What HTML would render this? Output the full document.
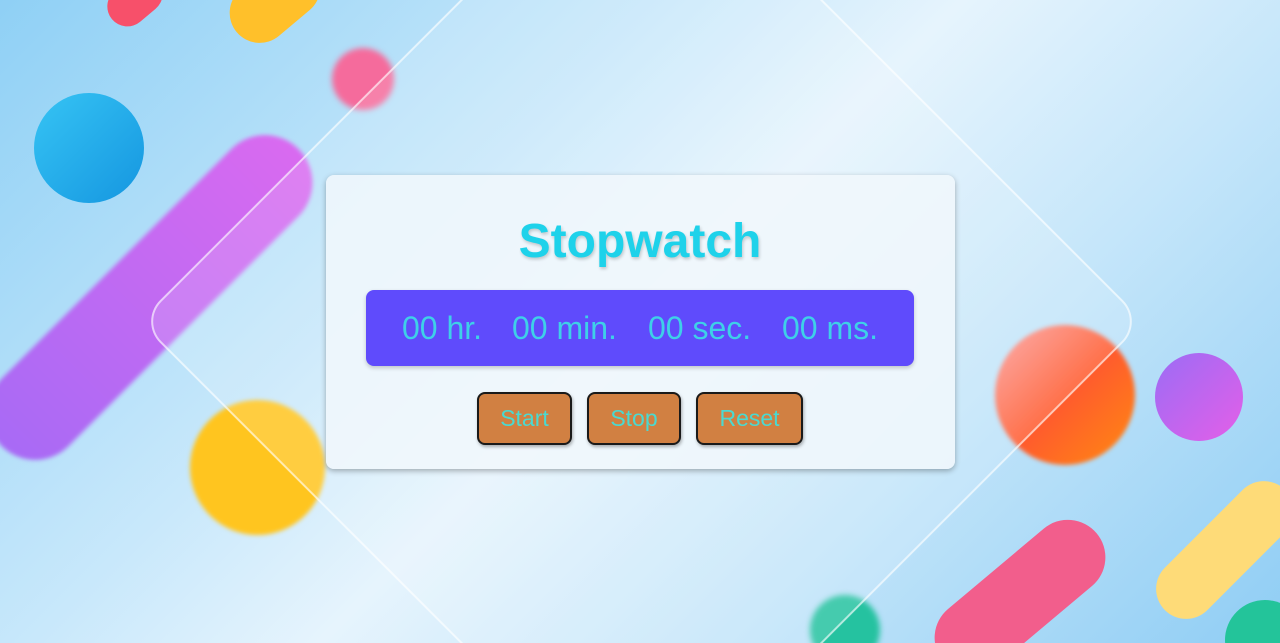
<!DOCTYPE html>
<html><head><style>
html,body{margin:0;width:1280px;height:643px;overflow:hidden}
#w{position:relative;width:1280px;height:643px;overflow:hidden;font-family:"Liberation Sans",sans-serif;
background:linear-gradient(135deg,#8fd0f5 0%,#c8e8fb 35%,#e6f4fd 50%,#c5e6fa 70%,#8fcdf4 100%);}
.s{position:absolute}
.card{position:absolute;left:326px;top:175px;width:629px;height:294px;border-radius:8px;background:rgba(240,247,252,0.88);box-shadow:0 2px 6px rgba(0,0,0,0.3);}
h1{position:absolute;left:0;right:0;top:215px;margin:0;text-align:center;font-size:48px;font-weight:bold;color:#1ed2ea;text-shadow:1px 2px 3px rgba(0,0,0,0.2);line-height:54px}
.disp{position:absolute;left:366px;top:290px;width:548px;height:76px;border-radius:8px;background:#5f4bfc;box-shadow:0 2px 4px rgba(0,0,0,0.2);color:#3ed0e8;font-size:32px;line-height:76px}
.disp span{position:absolute;top:0}
.b{position:absolute;top:392px;height:49px;border:2px solid #1a1a1a;border-radius:8px;background:#d18042;color:#4ad9d0;font-size:23px;text-align:center;line-height:49px;box-shadow:1px 2px 3px rgba(0,0,0,0.3)}
</style></head><body><div id="w">
<div class="s" style="left:-60px;top:250px;width:420px;height:95px;border-radius:50px;background:linear-gradient(90deg,#a86af5,#d96af0);transform:rotate(-45deg);filter:blur(2px)"></div>
<div class="s" style="left:34px;top:93px;width:110px;height:110px;border-radius:50%;background:linear-gradient(135deg,#36c4f4,#1596e0)"></div>
<div class="s" style="left:332px;top:48px;width:62px;height:62px;border-radius:50%;background:#f56b9c;filter:blur(3px)"></div>
<div class="s" style="left:225px;top:-30px;width:100px;height:60px;border-radius:40px;background:#ffc02a;transform:rotate(-40deg)"></div>
<div class="s" style="left:105px;top:-20px;width:60px;height:40px;border-radius:30px;background:#f7506a;transform:rotate(-40deg)"></div>
<div class="s" style="left:190px;top:400px;width:135px;height:135px;border-radius:50%;background:#ffc51f;filter:blur(2px)"></div>
<div class="s" style="left:995px;top:325px;width:140px;height:140px;border-radius:50%;background:linear-gradient(135deg,#fca0a0,#ff5a2e,#ff8a10);filter:blur(2px)"></div>
<div class="s" style="left:1155px;top:353px;width:88px;height:88px;border-radius:50%;background:linear-gradient(135deg,#9b6cf5,#e45fe8)"></div>
<div class="s" style="left:920px;top:560px;width:200px;height:75px;border-radius:40px;background:#f25e8c;transform:rotate(-40deg)"></div>
<div class="s" style="left:1140px;top:520px;width:170px;height:60px;border-radius:30px;background:#fedb78;transform:rotate(-45deg)"></div>
<div class="s" style="left:1225px;top:600px;width:80px;height:80px;border-radius:50%;background:#23c49a"></div>
<div class="s" style="left:810px;top:595px;width:70px;height:70px;border-radius:50%;background:#25c2a0;filter:blur(3px)"></div>
<div class="s" style="left:286px;top:-34px;width:707px;height:707px;border:2px solid rgba(255,255,255,0.6);border-radius:30px;background:rgba(255,255,255,0.15);transform:rotate(45deg)"></div>
<div class="card"></div>
<h1>Stopwatch</h1>
<div class="disp"><span style="left:36px">00 hr.</span><span style="left:146px">00 min.</span><span style="left:282px">00 sec.</span><span style="left:416px">00 ms.</span></div>
<div class="b" style="left:477px;width:91px">Start</div>
<div class="b" style="left:587px;width:90px">Stop</div>
<div class="b" style="left:696px;width:103px">Reset</div>
</div></body></html>
